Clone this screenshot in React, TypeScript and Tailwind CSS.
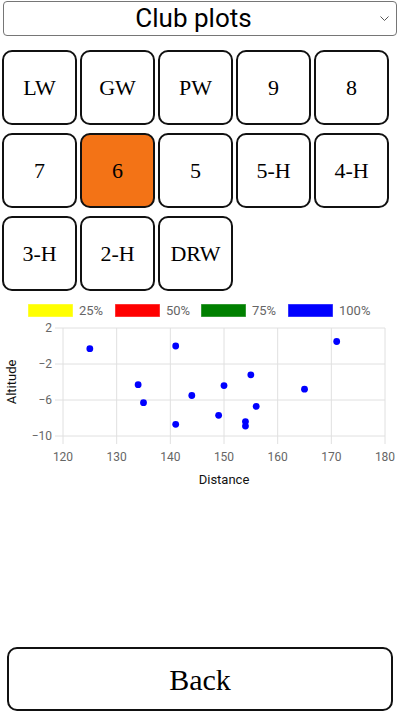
import { useState } from 'react';

const CLUBS = ['LW', 'GW', 'PW', '9', '8', '7', '6', '5', '5-H', '4-H', '3-H', '2-H', 'DRW'];

const LEGEND = [
  { label: '25%', color: '#ffff00', x: 28 },
  { label: '50%', color: '#ff0000', x: 115 },
  { label: '75%', color: '#008000', x: 201 },
  { label: '100%', color: '#0000ff', x: 288 },
];

// distance / altitude pairs
const SHOTS: [number, number][] = [
  [125, -0.3], [141, 0], [134, -4.3], [135, -6.3], [141, -8.7], [144, -5.5],
  [171, 0.5], [155, -3.2], [150, -4.4], [165, -4.8], [156, -6.7], [149, -7.7],
  [154, -8.4], [154, -8.9],
];

const X0 = 63, X1 = 385, Y0 = 328, Y1 = 436;
const px = (d: number) => X0 + ((d - 120) / 60) * (X1 - X0);
const py = (a: number) => Y0 + ((2 - a) / 12) * (Y1 - Y0);

function Chart() {
  const xTicks = [120, 130, 140, 150, 160, 170, 180];
  const yTicks = [2, -2, -6, -10];
  return (
    <svg width={400} height={195} viewBox="0 297 400 195" className="block" style={{ fontFamily: 'Roboto, sans-serif' }}>
      {LEGEND.map((l) => (
        <g key={l.label}>
          <rect x={l.x + 0.5} y={304.5} width={44} height={12} fill={l.color} stroke={l.color} strokeOpacity={0.6} />
          <text x={l.x + 51} y={315} fontSize={13} fill="#666">{l.label}</text>
        </g>
      ))}
      {xTicks.map((t) => (
        <g key={t}>
          <line x1={px(t)} x2={px(t)} y1={Y0} y2={Y1 + 8} stroke="#e0e0e0" />
          <text x={px(t)} y={461} fontSize={12} fill="#666" textAnchor="middle">{t}</text>
        </g>
      ))}
      {yTicks.map((t) => (
        <g key={t}>
          <line x1={X0 - 8} x2={X1} y1={py(t)} y2={py(t)} stroke="#e0e0e0" />
          <text x={52} y={py(t) + 4} fontSize={12} fill="#666" textAnchor="end">{t < 0 ? `\u2212${-t}` : t}</text>
        </g>
      ))}
      <text x={224} y={484} fontSize={13} fill="#111" textAnchor="middle">Distance</text>
      <text x={0} y={0} fontSize={13} fill="#111" textAnchor="middle" transform="translate(16 382) rotate(-90)">Altitude</text>
      {SHOTS.map(([d, a], i) => (
        <circle key={i} cx={px(d)} cy={py(a)} r={3.4} fill="#0000ff" />
      ))}
    </svg>
  );
}

export default function App() {
  const [selected, setSelected] = useState('6');

  return (
    <div className="flex flex-col h-[714px] w-[400px] bg-white">
      <div className="mx-[3px] mt-[1px] h-[35px] border border-[#767676] rounded-[4px] flex items-center relative">
        <span className="flex-1 text-center pr-[13px] text-[26px] text-black" style={{ fontFamily: 'Roboto, sans-serif' }}>
          Club plots
        </span>
        <svg className="absolute right-[7px] top-[14px]" width="9" height="6" viewBox="0 0 9 6">
          <polyline points="0.5,0.5 4.5,4.5 8.5,0.5" fill="none" stroke="#555" strokeWidth="1" />
        </svg>
      </div>

      <div className="mt-[14px] ml-[2px] flex flex-wrap gap-x-[3px] gap-y-[8px] w-[390px]">
        {CLUBS.map((c) => (
          <button
            key={c}
            onClick={() => setSelected(c)}
            className={`w-[75px] h-[75px] border-2 border-[#111] rounded-[10px] text-[22px] text-black flex items-center justify-center ${
              selected === c ? 'bg-[#f37316]' : 'bg-white'
            }`}
            style={{ fontFamily: '"Liberation Serif", serif' }}
          >
            {c}
          </button>
        ))}
      </div>

      <div className="mt-[6px]">
        <Chart />
      </div>

      <button
        className="mt-auto mb-[3px] mx-[7px] h-[64px] border-2 border-[#111] rounded-[10px] bg-white text-[30px] text-black"
        style={{ fontFamily: '"Liberation Serif", serif' }}
      >
        Back
      </button>
    </div>
  );
}
